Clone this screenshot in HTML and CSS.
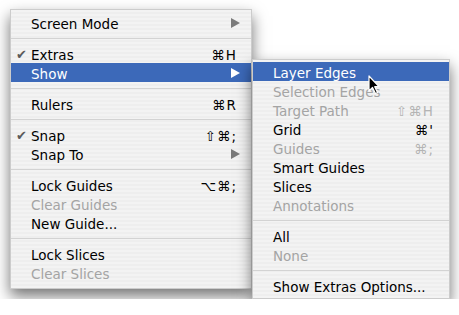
FILE: index.html
```html
<!DOCTYPE html>
<html lang="en">
<head>
    <meta charset="UTF-8">
    <title>View Menu</title>
    <link rel="stylesheet" href="styles.css">
</head>
<body>

    <div class="menus">
        <!-- View menu -->
        <ul class="menu main">
            <li class="item"><span class="check"></span><span class="label">Screen Mode</span><span class="arrow"><svg width="9" height="10" viewBox="0 0 9 10"><polygon points="0,0 9,5 0,10"/></svg></span></li>
            <li class="sep"></li>
            <li class="item"><span class="check">✔</span><span class="label">Extras</span><span class="key">⌘H</span></li>
            <li class="item active"><span class="check"></span><span class="label">Show</span><span class="arrow"><svg width="9" height="10" viewBox="0 0 9 10"><polygon points="0,0 9,5 0,10"/></svg></span></li>
            <li class="sep"></li>
            <li class="item"><span class="check"></span><span class="label">Rulers</span><span class="key">⌘R</span></li>
            <li class="sep"></li>
            <li class="item"><span class="check">✔</span><span class="label">Snap</span><span class="key">⇧⌘;</span></li>
            <li class="item"><span class="check"></span><span class="label">Snap To</span><span class="arrow"><svg width="9" height="10" viewBox="0 0 9 10"><polygon points="0,0 9,5 0,10"/></svg></span></li>
            <li class="sep"></li>
            <li class="item"><span class="check"></span><span class="label">Lock Guides</span><span class="key">⌥⌘;</span></li>
            <li class="item off"><span class="check"></span><span class="label">Clear Guides</span></li>
            <li class="item"><span class="check"></span><span class="label">New Guide...</span></li>
            <li class="sep"></li>
            <li class="item"><span class="check"></span><span class="label">Lock Slices</span></li>
            <li class="item off"><span class="check"></span><span class="label">Clear Slices</span></li>
        </ul>

        <!-- Show submenu -->
        <ul class="menu sub">
            <li class="item active"><span class="check"></span><span class="label">Layer Edges</span></li>
            <li class="item off"><span class="check"></span><span class="label">Selection Edges</span></li>
            <li class="item off"><span class="check"></span><span class="label">Target Path</span><span class="key">⇧⌘H</span></li>
            <li class="item"><span class="check"></span><span class="label">Grid</span><span class="key">⌘'</span></li>
            <li class="item off"><span class="check"></span><span class="label">Guides</span><span class="key">⌘;</span></li>
            <li class="item"><span class="check"></span><span class="label">Smart Guides</span></li>
            <li class="item"><span class="check"></span><span class="label">Slices</span></li>
            <li class="item off"><span class="check"></span><span class="label">Annotations</span></li>
            <li class="sep"></li>
            <li class="item"><span class="check"></span><span class="label">All</span></li>
            <li class="item off"><span class="check"></span><span class="label">None</span></li>
            <li class="sep"></li>
            <li class="item"><span class="check"></span><span class="label">Show Extras Options...</span></li>
        </ul>

        <svg class="cursor" width="13" height="20" viewBox="0 0 13 20">
            <polygon points="1,1 1,16 4.5,12.5 7.5,18.5 9.5,17.5 6.7,11.7 11,11.7" fill="#000" stroke="#fff" stroke-width="1.2" stroke-linejoin="round"/>
        </svg>
    </div>

</body>
</html>
```

FILE: styles.css
```css
body {
    margin: 0;
    background: #fff;
    font-family: "DejaVu Sans", Verdana, sans-serif;
    font-size: 13.5px;
}

.menus {
    position: relative;
    display: flex;
    align-items: flex-start;
    padding: 9px 0 0 10px;
}

.menu {
    list-style: none;
    margin: 0;
    background: repeating-linear-gradient(#f3f3f3 0, #f3f3f3 2px, #eeeeee 2px, #eeeeee 4px);
    border: 1px solid #cccccc;
    box-shadow: 0 7px 14px rgba(0, 0, 0, 0.55);
}

.main {
    width: 240px;
    padding: 3px 0 6px;
}

.sub {
    width: 196px;
    margin-top: 50px;
    padding: 2px 0 3px;
}

.item {
    display: flex;
    align-items: center;
    height: 19px;
    padding-top: 2px;
    box-sizing: border-box;
    color: #000;
}

.item.off {
    color: #a4a4a4;
}

.item.active {
    background: #3c69b9;
    color: #fff;
}

.check {
    width: 20px;
    padding-left: 5px;
    font-size: 13px;
    color: #5a5a5a;
    box-sizing: border-box;
}

.label {
    flex: 1;
}

.key {
    padding-right: 14px;
    letter-spacing: 1px;
}

.off .key {
    color: #b4b4b4;
}

.arrow {
    display: flex;
    padding-right: 11px;
    margin-top: -2px;
    fill: #7a7a7a;
}

.active .arrow {
    fill: #fff;
}

.sub .key {
    padding-right: 15px;
}

.sep {
    height: 12px;
    display: flex;
    align-items: center;
}

.sep::after {
    content: "";
    flex: 1;
    height: 1px;
    background: #d3d3d3;
}

.cursor {
    position: absolute;
    left: 368px;
    top: 75px;
}
```
